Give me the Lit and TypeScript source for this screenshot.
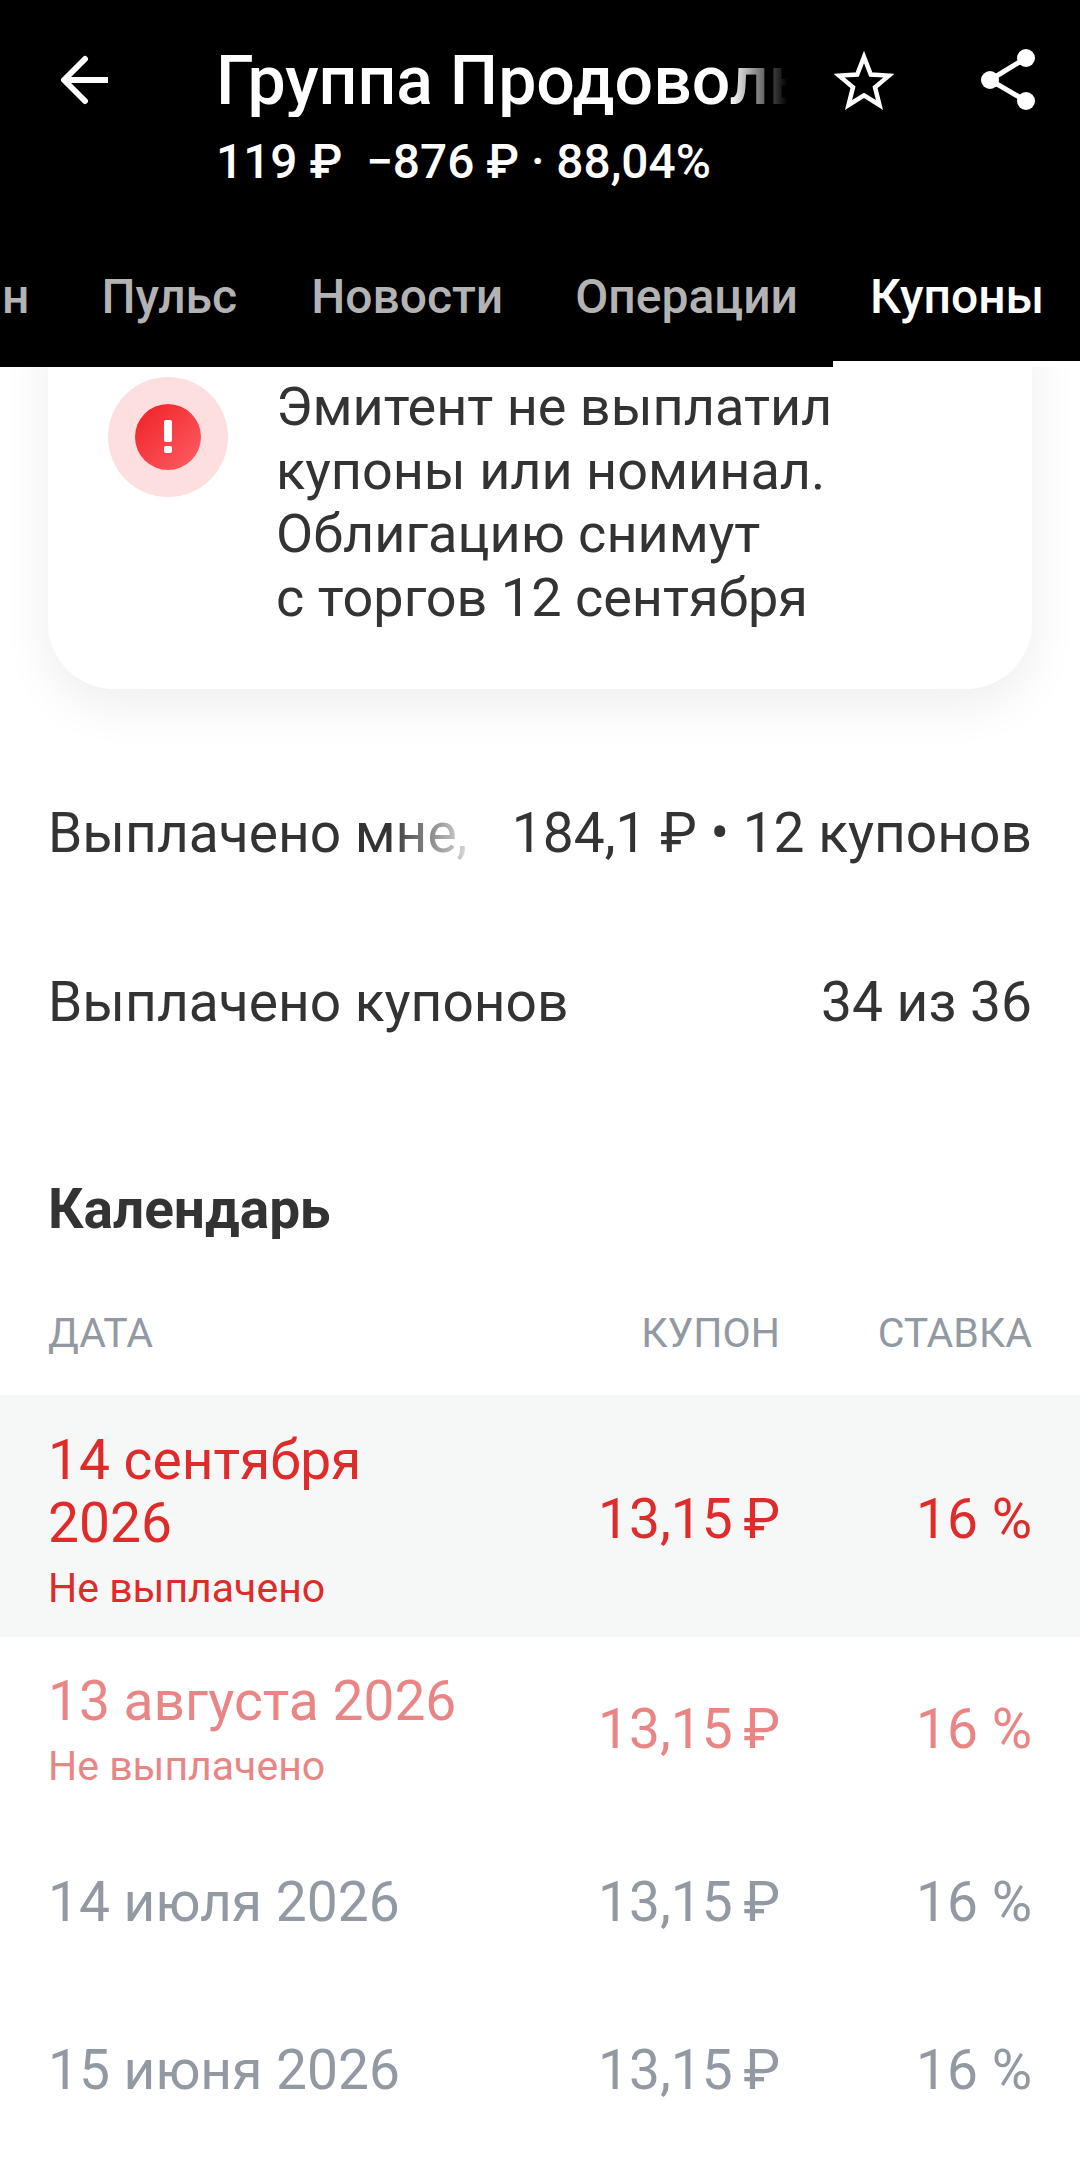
import { LitElement, html, css } from "lit";
import { customElement } from "lit/decorators.js";

const rows = [
  { date: "14 сентября\n2026", note: "Не выплачено", cls: "now" },
  { date: "13 августа 2026", note: "Не выплачено", cls: "missed" },
  { date: "14 июля 2026", note: "", cls: "paid" },
  { date: "15 июня 2026", note: "", cls: "paid" },
];

@customElement("app-root")
export class AppRoot extends LitElement {
  static styles = css`
    :host { display: block; width: 1080px; height: 2161px; overflow: hidden; background: #fff; font-family: Roboto, "Noto Sans", sans-serif; color: #333; }
    .header { background: #000; color: #fff; height: 367px; box-sizing: border-box; display: flex; flex-direction: column; position: relative; z-index: 2; }
    .top { display: grid; grid-template-columns: 216px 577px 1fr; height: 269px; }
    .back { padding: 55px 0 0 59px; }
    .titles { padding-top: 45px; min-width: 0; }
    .title { font-size: 68px; line-height: 72px; font-weight: 500; white-space: nowrap; overflow: hidden; -webkit-mask-image: linear-gradient(to right, #000 89%, transparent 99%); mask-image: linear-gradient(to right, #000 89%, transparent 99%); }
    .sub { font-size: 47.8px; line-height: 56px; font-weight: 500; margin-top: 17px; white-space: pre; }
    .actions { display: flex; justify-content: space-between; padding: 48px 44px 0 41px; align-items: flex-start; }
    .tabs { display: flex; justify-content: flex-end; align-items: flex-start; height: 98px; overflow: hidden; font-size: 48px; font-weight: 500; color: #b3b3b3; }
    .tab { line-height: 56px; white-space: nowrap; padding: 0 36px; box-sizing: border-box; height: 98px; flex: none; }
    .tab.wide { padding-right: 38px; }
    .tab.shift { padding-right: 35px; }
    .tab.active { color: #fff; width: 247px; padding: 0 0 0 37px; border-bottom: 6px solid #fff; }
    .card { margin: -40px 48px 0; height: 362px; box-sizing: border-box; border-radius: 0 0 66px 66px; background: #fff; box-shadow: 0 16px 50px rgba(0, 0, 0, .07); display: flex; padding: 48px 40px 0 60px; gap: 48px; }
    .halo { flex: none; width: 120px; height: 120px; margin-top: 2px; border-radius: 50%; background: #fddfe0; display: flex; align-items: center; justify-content: center; }
    .card p { margin: 0; font-size: 54px; line-height: 63.5px; white-space: pre-line; color: #333; }
    .stat { display: flex; justify-content: space-between; margin: 0 48px; font-size: 55.1px; line-height: 60px; white-space: nowrap; }
    .stat .fade { -webkit-mask-image: linear-gradient(to right, #000 78%, transparent 100%); mask-image: linear-gradient(to right, #000 78%, transparent 100%); width: 437px; flex: none; }
    .stats { display: flex; flex-direction: column; gap: 109px; margin-top: 114px; }
    h2 { margin: 147px 48px 0; font-size: 55px; line-height: 60px; font-weight: 700; color: #333; }
    .grid { display: grid; grid-template-columns: 1fr 200px 252px; padding: 0 48px; align-items: center; }
    .head { font-size: 41px; line-height: 48px; color: #9299a2; margin-top: 70px; height: 86px; align-items: start; }
    .r { text-align: right; }
    .row { font-size: 55.1px; line-height: 63px; }
    .row .r:nth-child(2) { word-spacing: -3px; }
    .row .d { white-space: pre-line; }
    .row .n { font-size: 41px; line-height: 66px; }
    .now { background: #f6f8f8; color: #e02b2b; height: 242px; }
    .now .r { padding-top: 6px; }
    .now .c { padding-top: 17px; }
    .missed { color: #ea8585; height: 181px; }
    .missed .r { padding-top: 3px; }
    .missed .c { padding-top: 13px; }
    .paid { color: #9299a2; height: 168px; }
  `;

  render() {
    return html`
      <div class="header">
        <div class="top">
          <div class="back">
            <svg width="52" height="52" viewBox="0 0 52 52" fill="none" stroke="#fff" stroke-width="6" stroke-linejoin="round"><path d="M5 25H49"/><path d="M26 4 5 25 26 46" stroke-linecap="round"/></svg>
          </div>
          <div class="titles">
            <div class="title">Группа Продовольствие</div>
            <div class="sub">119 ₽  −876 ₽ · 88,04%</div>
          </div>
          <div class="actions">
            <svg width="60" height="64" viewBox="0 -3 60 64" fill="none" stroke="#fff" stroke-width="4.5" stroke-linejoin="miter"><path d="M30 6 36.8 23.5 55 24.6 41 36.4 45.5 54 30 44.3 14.5 54 19 36.4 5 24.6 23.2 23.5Z"/></svg>
            <svg width="56" height="64" viewBox="0 0 56 64"><path d="M46 10 10 32 46 53" fill="none" stroke="#fff" stroke-width="5"/><circle cx="46" cy="10" r="9" fill="#fff"/><circle cx="10" cy="32" r="9" fill="#fff"/><circle cx="46" cy="53" r="9" fill="#fff"/></svg>
          </div>
        </div>
        <div class="tabs">
          <div class="tab">н</div>
          <div class="tab wide">Пульс</div>
          <div class="tab">Новости</div>
          <div class="tab shift">Операции</div>
          <div class="tab active">Купоны</div>
        </div>
      </div>
      <div class="card">
        <div class="halo">
          <svg width="66" height="66" viewBox="0 0 66 66"><defs><linearGradient id="g" x1="0" y1="0" x2="1" y2="1"><stop offset="0" stop-color="#ee2024"/><stop offset="1" stop-color="#ff5f66"/></linearGradient></defs><circle cx="33" cy="33" r="33" fill="url(#g)"/><rect x="29" y="16" width="8" height="22" rx="2" fill="#fff"/><rect x="29" y="42" width="8" height="7" rx="2" fill="#fff"/></svg>
        </div>
        <p>Эмитент не выплатил
купоны или номинал.
Облигацию снимут
с торгов 12 сентября</p>
      </div>
      <div class="stats">
        <div class="stat"><div class="fade">Выплачено мне,</div><div>184,1 ₽ • 12 купонов</div></div>
        <div class="stat"><div>Выплачено купонов</div><div>34 из 36</div></div>
      </div>
      <h2>Календарь</h2>
      <div class="grid head"><div>ДАТА</div><div class="r">КУПОН</div><div class="r">СТАВКА</div></div>
      ${rows.map(
        (r) => html`<div class="grid row ${r.cls}">
          <div class="c"><div class="d">${r.date}</div>${r.note ? html`<div class="n">${r.note}</div>` : ""}</div>
          <div class="r">13,15 ₽</div>
          <div class="r">16 %</div>
        </div>`
      )}
    `;
  }
}
